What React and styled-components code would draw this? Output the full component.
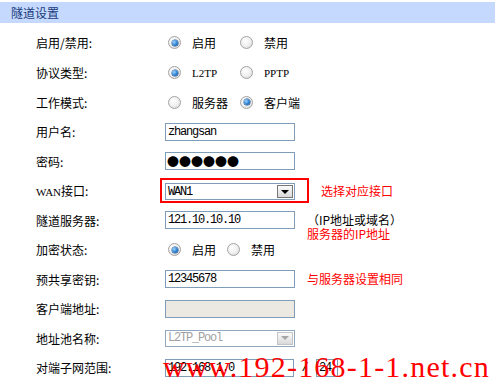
import React from "react";
import styled, { createGlobalStyle } from "styled-components";

const Global = createGlobalStyle`
  html, body { margin: 0; padding: 0; background: #fff; }
  body { width: 495px; height: 384px; overflow: hidden; font-family: "Noto Sans CJK SC", "Liberation Sans", sans-serif; }
`;

const Page = styled.div`
  position: relative;
  width: 495px;
  padding-top: 2px;
`;

const Header = styled.div`
  height: 21px;
  background: #c5d9fe;
  color: #173a7c;
  font-size: 12px;
  line-height: 21px;
  padding-left: 11px;
`;

const Form = styled.div`
  padding-top: 5.2px;
`;

const Row = styled.div`
  display: flex;
  align-items: center;
  height: 29.55px;
`;

const Label = styled.div`
  box-sizing: border-box;
  width: 165px;
  padding-left: 36px;
  font-size: 12px;
  color: #000;
  white-space: nowrap;
`;

const Latin = styled.span`
  font-family: "Liberation Serif", serif;
  font-size: 11px;
  color: ${(p) => p.$color || "#000"};
`;

const RadioGroup = styled.div`
  display: flex;
  align-items: center;
  padding-left: 3px;
`;

const Option = styled.label`
  display: flex;
  align-items: center;
  width: ${(p) => p.$w || 72}px;
  font-size: 12px;
  color: #000;
`;

const RadioDot = styled.span`
  position: relative;
  box-sizing: border-box;
  width: 13px;
  height: 13px;
  border-radius: 50%;
  border: 1px solid #a3a3a3;
  background: radial-gradient(circle at 40% 35%, #ffffff 0%, #eeeeee 55%, #cfcfcf 100%);
  margin-right: 11px;
  flex: none;
  &::after {
    content: "";
    display: ${(p) => (p.$on ? "block" : "none")};
    position: absolute;
    left: 2.5px;
    top: 2.5px;
    width: 6px;
    height: 6px;
    border-radius: 50%;
    background: radial-gradient(circle at 35% 35%, #9fd4ff 0%, #2a7fd0 55%, #0f4a8c 100%);
    box-shadow: 0 0 0 0.5px #1a4f8a;
  }
`;

const TextInput = styled.input`
  box-sizing: border-box;
  width: ${(p) => p.$w || 130}px;
  height: 18px;
  margin: 0;
  border: 1px solid #7f9db9;
  padding: 0 2px;
  background: ${(p) => (p.disabled ? "#ebe9e1" : "#fff")};
  font-family: "Liberation Mono", monospace;
  font-size: 12px;
  letter-spacing: -1.2px;
  color: #000;
  outline: none;
`;

const DotsInput = styled(TextInput)`
  font-family: "Noto Sans CJK SC", sans-serif;
  font-size: 12px;
  letter-spacing: 0;
  padding-left: 1px;
`;

const Highlight = styled.div`
  margin-left: -5px;
  border: 2px solid #ff0000;
  padding: 3px 12px 1px 3px;
`;

const SelectBox = styled.div`
  box-sizing: border-box;
  display: flex;
  align-items: center;
  justify-content: space-between;
  width: 130px;
  height: 17px;
  border: 1px solid ${(p) => (p.$disabled ? "#8fa7c1" : "#7f9db9")};
  padding: 0 1px 0 2px;
  background: #fff;
`;

const SelectText = styled.span`
  font-family: "Liberation Mono", monospace;
  font-size: 12px;
  letter-spacing: -1.2px;
  color: ${(p) => (p.$disabled ? "#a0a0a0" : "#000")};
`;

const ArrowButton = styled.span`
  box-sizing: border-box;
  display: flex;
  align-items: center;
  justify-content: center;
  width: 16px;
  height: 13px;
  border: 1px solid ${(p) => (p.$disabled ? "#c4c4c4" : "#777")};
  background: linear-gradient(#fbfbfb, #d9d9d9);
  &::after {
    content: "";
    border-left: 4px solid transparent;
    border-right: 4px solid transparent;
    border-top: 4px solid ${(p) => (p.$disabled ? "#a6a6a6" : "#000")};
  }
`;

const Note = styled.div`
  margin-left: 12px;
  font-size: 12px;
  line-height: 14px;
  height: 14px;
  color: ${(p) => p.$color || "#000"};
  white-space: nowrap;
`;

const NoteLine = styled.div`
  color: ${(p) => p.$color || "#000"};
  line-height: 14px;
`;

const Slash = styled.span`
  width: 22px;
  text-align: center;
  font-family: "Liberation Mono", monospace;
  font-size: 12px;
`;

const Watermark = styled.div`
  position: absolute;
  left: 163px;
  top: 352px;
  font-family: "Liberation Serif", serif;
  font-size: 30px;
  line-height: 30px;
  letter-spacing: 1.2px;
  color: #ff0000;
  white-space: nowrap;
  pointer-events: none;
`;

function Radios({ options, widths }) {
  return (
    <RadioGroup>
      {options.map((o, i) => (
        <Option key={i} $w={widths ? widths[i] : 72}>
          <RadioDot $on={o.on} />
          {o.latin ? <Latin>{o.text}</Latin> : o.text}
        </Option>
      ))}
    </RadioGroup>
  );
}

export default function App() {
  return (
    <Page>
      <Global />
      <Header>隧道设置</Header>
      <Form>
        <Row>
          <Label>启用/禁用:</Label>
          <Radios options={[{ text: "启用", on: true }, { text: "禁用" }]} />
        </Row>
        <Row>
          <Label>协议类型:</Label>
          <Radios options={[{ text: "L2TP", on: true, latin: true }, { text: "PPTP", latin: true }]} />
        </Row>
        <Row>
          <Label>工作模式:</Label>
          <Radios options={[{ text: "服务器" }, { text: "客户端", on: true }]} />
        </Row>
        <Row>
          <Label>用户名:</Label>
          <TextInput readOnly value="zhangsan" />
        </Row>
        <Row>
          <Label>密码:</Label>
          <DotsInput readOnly value="●●●●●●" />
        </Row>
        <Row>
          <Label>
            <Latin>WAN</Latin>接口:
          </Label>
          <Highlight>
            <SelectBox>
              <SelectText>WAN1</SelectText>
              <ArrowButton />
            </SelectBox>
          </Highlight>
          <Note $color="#ff0000">选择对应接口</Note>
        </Row>
        <Row>
          <Label>隧道服务器:</Label>
          <TextInput readOnly value="121.10.10.10" />
          <Note>
            <NoteLine>（IP地址或域名）</NoteLine>
            <NoteLine $color="#ff0000">服务器的IP地址</NoteLine>
          </Note>
        </Row>
        <Row>
          <Label>加密状态:</Label>
          <Radios options={[{ text: "启用", on: true }, { text: "禁用" }]} widths={[59, 60]} />
        </Row>
        <Row>
          <Label>预共享密钥:</Label>
          <TextInput readOnly value="12345678" />
          <Note $color="#ff0000">与服务器设置相同</Note>
        </Row>
        <Row>
          <Label>客户端地址:</Label>
          <TextInput disabled value="" readOnly />
        </Row>
        <Row>
          <Label>地址池名称:</Label>
          <SelectBox $disabled>
            <SelectText $disabled>L2TP_Pool</SelectText>
            <ArrowButton $disabled />
          </SelectBox>
        </Row>
        <Row>
          <Label>对端子网范围:</Label>
          <TextInput readOnly value="192.168.1.0" $w={129} />
          <Slash>/</Slash>
          <TextInput readOnly value="24" $w={22} />
        </Row>
      </Form>
      <Watermark>www.192-168-1-1.net.cn</Watermark>
    </Page>
  );
}
